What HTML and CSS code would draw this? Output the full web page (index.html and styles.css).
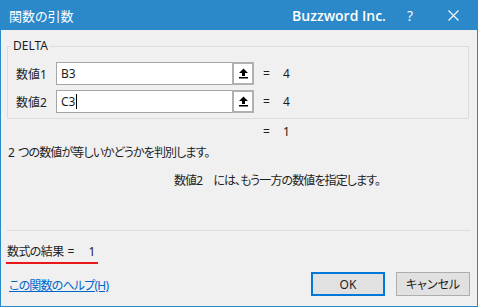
FILE: index.html
```html
<!DOCTYPE html>
<html lang="ja">
<head>
  <meta charset="UTF-8">
  <title>関数の引数</title>
  <link rel="stylesheet" href="styles.css">
</head>
<body>
  <div class="window">
    <div class="titlebar">
      <div class="title">関数の引数</div>
      <div class="brand">Buzzword Inc.</div>
      <div class="help">?</div>
      <svg class="close" width="11" height="11" viewBox="0 0 11 11">
        <path d="M0.5 0.5 L10.5 10.5 M10.5 0.5 L0.5 10.5" stroke="#fff" stroke-width="1.1" fill="none"/>
      </svg>
    </div>

    <div class="content">
      <fieldset class="group">
        <legend>DELTA</legend>
        <div class="arg-row">
          <label class="arg-label">数値1</label>
          <div class="field">
            <div class="field-text">B3</div>
            <div class="ref-btn">
              <svg width="11" height="11" viewBox="0 0 11 11">
                <path d="M5.5 0.5 L10 5 L7 5 L7 8 L4 8 L4 5 L1 5 Z" fill="#000"/>
                <rect x="1" y="9" width="9" height="1.5" fill="#000"/>
              </svg>
            </div>
          </div>
          <div class="arg-value"><span class="eq">=</span>4</div>
        </div>
        <div class="arg-row">
          <label class="arg-label">数値2</label>
          <div class="field">
            <div class="field-text">C3<span class="caret"></span></div>
            <div class="ref-btn">
              <svg width="11" height="11" viewBox="0 0 11 11">
                <path d="M5.5 0.5 L10 5 L7 5 L7 8 L4 8 L4 5 L1 5 Z" fill="#000"/>
                <rect x="1" y="9" width="9" height="1.5" fill="#000"/>
              </svg>
            </div>
          </div>
          <div class="arg-value"><span class="eq">=</span>4</div>
        </div>
      </fieldset>

      <div class="func-value"><span class="eq">=</span>1</div>
      <div class="desc">2 つの数値が等しいかどうかを判別します。</div>
      <div class="arg-desc">数値2　には、もう一方の数値を指定します。</div>

      <div class="separator"></div>

      <div class="footer">
        <div class="footer-left">
          <div class="formula-result">数式の結果<span class="result-eq">=</span>1</div>
          <a class="help-link" href="#">この関数のヘルプ(H)</a>
        </div>
        <div class="buttons">
          <button class="btn btn-default">OK</button>
          <button class="btn">キャンセル</button>
        </div>
      </div>
    </div>
  </div>
</body>
</html>
```

FILE: styles.css
```css
* {
  margin: 0;
  padding: 0;
  box-sizing: border-box;
}

body {
  background: #fff;
  font-family: "Noto Sans", "Noto Sans CJK JP", sans-serif;
  font-size: 12px;
  color: #1e1e1e;
  font-feature-settings: "palt";
}

.window {
  width: 478px;
  height: 307px;
  border: 1px solid #2b88c9;
  border-top: 0;
  background: #f0f0f0;
  display: flex;
  flex-direction: column;
}

/* title bar */
.titlebar {
  height: 30px;
  flex-shrink: 0;
  background: #2b88c9;
  color: #fff;
  display: flex;
  align-items: center;
  padding-left: 8px;
}

.title {
  flex: 1;
  font-family: "Noto Sans CJK JP", sans-serif;
  font-size: 13px;
}

.brand {
  font-family: "Open Sans", sans-serif;
  font-weight: 600;
  font-size: 14px;
}

.help {
  font-family: "Open Sans", sans-serif;
  font-size: 14px;
  margin-left: 21px;
}

.close {
  margin-left: 35px;
  margin-right: 18px;
}

/* dialog content */
.content {
  flex: 1;
  display: flex;
  flex-direction: column;
  padding: 0 8px 0 6px;
}

.group {
  margin-top: 8px;
  border: 1px solid #dcdcdc;
  padding: 0 0 5px 8px;
}

.group legend {
  margin-left: -5px;
  padding: 0 2px;
  line-height: 16px;
}

.arg-row {
  display: flex;
  align-items: center;
  margin-top: 5px;
}

.arg-row:first-of-type {
  margin-top: 8px;
}

.arg-label {
  width: 40px;
}

.field {
  display: flex;
  height: 23px;
}

.field-text {
  width: 176px;
  background: #fff;
  border: 1px solid #a5a5a5;
  border-right: 0;
  padding-left: 4px;
  display: flex;
  align-items: center;
}

.caret {
  display: inline-block;
  width: 1px;
  height: 15px;
  background: #000;
  margin-left: 1px;
}

.ref-btn {
  width: 22px;
  background: #fff;
  border: 2px solid #b0b0b0;
  display: flex;
  align-items: center;
  justify-content: center;
}

.arg-value {
  margin-left: 9px;
}

.eq {
  display: inline-block;
  width: 20px;
}

.func-value {
  margin-top: 5px;
  padding-left: 256px;
  line-height: 16px;
}

.desc {
  margin-top: 5px;
  padding-left: 1px;
  line-height: 16px;
  letter-spacing: -0.9px;
  word-spacing: 2px;
}

.arg-desc {
  margin-top: 12px;
  padding-left: 167px;
  line-height: 16px;
  letter-spacing: -0.9px;
}

.separator {
  margin-top: 41px;
  border-top: 1px solid #dcdcdc;
  margin-right: -1px;
}

/* footer */
.footer {
  margin-top: auto;
  padding-bottom: 10px;
  margin-right: -1px;
  display: flex;
  justify-content: space-between;
  align-items: flex-end;
}

.footer-left {
  display: flex;
  flex-direction: column;
  align-items: flex-start;
  padding-bottom: 2px;
}

.formula-result {
  line-height: 16px;
  padding: 0 3px 2px 1px;
  margin-left: -1px;
  border-bottom: 2px solid #e81818;
  letter-spacing: -0.6px;
}

.result-eq {
  display: inline-block;
  width: 21px;
  margin-left: 4px;
  letter-spacing: 0;
}

.help-link {
  margin-top: 14px;
  padding-left: 2px;
  line-height: 16px;
  color: #0066cc;
  letter-spacing: -0.8px;
}

.buttons {
  display: flex;
  gap: 11px;
}

.btn {
  width: 74px;
  height: 24px;
  background: #e1e1e1;
  border: 1px solid #adadad;
  font-family: "Noto Sans", "Noto Sans CJK JP", sans-serif;
  font-size: 12px;
  color: #1e1e1e;
  font-feature-settings: "palt";
}

.btn-default {
  border: 2px solid #0078d7;
}
```
